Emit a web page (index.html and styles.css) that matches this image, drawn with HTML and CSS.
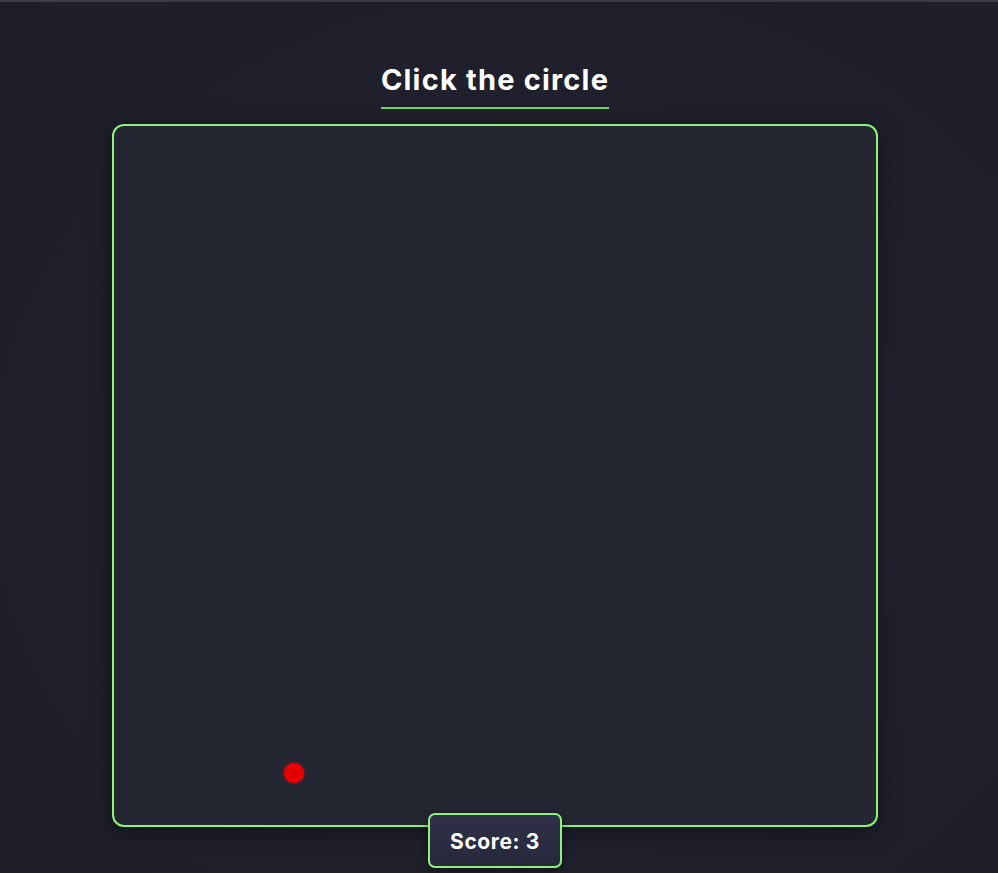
FILE: index.html
```html
<!DOCTYPE html>
<html>
<head>
<meta charset="utf-8">
<link rel="stylesheet" href="styles.css">
</head>
<body>
<div class="topline"></div>
<main class="page">
  <h1 class="title">Click the circle</h1>
  <div class="board">
    <div class="dot" style="left:170px; top:637px;"></div>
    <div class="score">Score: 3</div>
  </div>
</main>
</body>
</html>
```
FILE: styles.css
```css
html, body {
  margin: 0;
  padding: 0;
}
body {
  background: radial-gradient(ellipse at 55% 55%, #252734 0%, #1f202b 60%, #1d1e29 100%);
  min-height: 873px;
  font-family: "Inter", "Open Sans", sans-serif;
  color: #fff;
  overflow: hidden;
}
.topline {
  height: 2px;
  background: #3b3c3f;
}
.page {
  width: 990px;
  display: flex;
  flex-direction: column;
  align-items: center;
}
.title {
  margin: 58px 0 0 0;
  font-size: 29px;
  font-weight: 700;
  letter-spacing: 1.2px;
  line-height: 40px;
  padding-bottom: 7px;
  border-bottom: 2px solid #72d85e;
}
.board {
  position: relative;
  margin-top: 15px;
  width: 762px;
  height: 699px;
  border: 2px solid #8cf27a;
  border-radius: 12px;
  background: #242632;
  box-shadow: 0 4px 22px rgba(0, 0, 0, 0.45);
}
.dot {
  position: absolute;
  width: 20px;
  height: 20px;
  border-radius: 50%;
  background: radial-gradient(circle, #d80000 0%, #ee0000 60%, #f00 100%);
  box-shadow: 0 0 3px rgba(255, 0, 0, 0.8);
}
.score {
  position: absolute;
  left: 314px;
  top: 687px;
  width: 134px;
  height: 55px;
  box-sizing: border-box;
  border: 2px solid #8cf27a;
  border-radius: 7px;
  background: linear-gradient(#30314a, #272839);
  box-shadow: 0 2px 8px rgba(0, 0, 0, 0.5);
  display: flex;
  align-items: center;
  justify-content: center;
  font-size: 21px;
  font-weight: 700;
  letter-spacing: 0.6px;
  padding-top: 2px;
}
```
